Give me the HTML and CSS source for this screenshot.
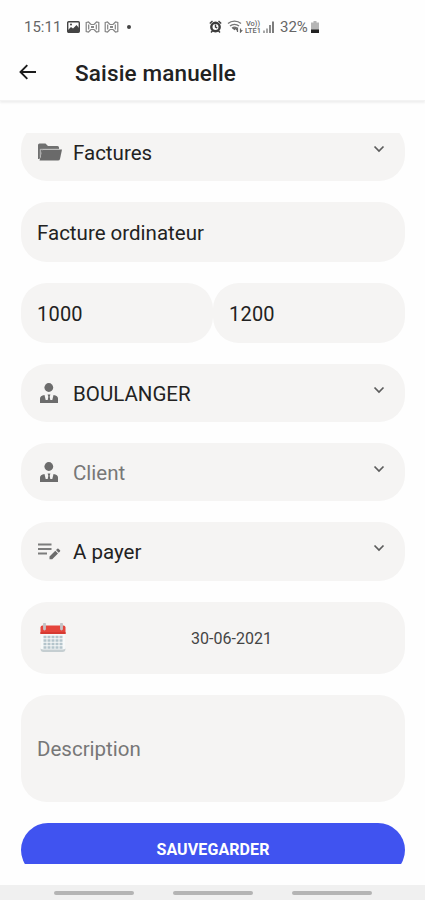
FILE: index.html
```html
<!DOCTYPE html>
<html lang="fr">
<head>
  <meta charset="UTF-8" />
  <meta name="viewport" content="width=device-width, initial-scale=1.0" />
  <title>Saisie manuelle</title>
  <link rel="stylesheet" href="styles.css">
</head>
<body>
  <!-- Icônes réutilisées -->
  <svg class="sprite" width="0" height="0">
    <symbol id="chevron" viewBox="0 0 12 8">
      <path d="M1.5 1.5 6 6l4.500-4.500" fill="none" stroke="#5c5c5c" stroke-width="1.700" />
    </symbol>
    <symbol id="person" viewBox="0 0 18 20">
      <circle cx="8.800" cy="4.500" r="4.400" fill="#6c6c6c" />
      <path d="M0 20v-4.500c0-2 1.500-3 4.500-3.500l1.200 5h2l.6-3.300-.7-2.200h2.800l-.7 2.200.6 3.300h2l1.200-5c3 .5 4.500 1.500 4.500 3.500V20z" fill="#6c6c6c" />
    </symbol>
    <symbol id="gamepad" viewBox="0 0 15 12">
      <path d="M1.200 1.500 3.500 1 6 3.500h3L11.500 1l2.300.5v9l-2.300.5L9 8.500H6L3.500 11l-2.300-.5zM3.700 3.500v5M11.300 3.500v5" fill="none" stroke="#848484" stroke-width="1.200" />
      <path d="M6 5h3v2H6z" fill="#888" />
    </symbol>
  </svg>

  <div class="status-bar">
    <span class="time">15:11</span>
    <svg class="ic-picture" viewBox="0 0 13 12">
      <rect x=".7" y=".7" width="11.600" height="10.600" rx="1" fill="none" stroke="#444" stroke-width="1.400" />
      <path d="M1 9l3-3 2 1.500L9.500 4 12 7v4H1z" fill="#444" />
      <circle cx="4" cy="3.500" r="1" fill="#444" />
    </svg>
    <svg class="ic-pad"><use href="#gamepad" /></svg>
    <svg class="ic-pad"><use href="#gamepad" /></svg>
    <span class="dot"></span>
    <div class="status-right">
      <svg class="ic-alarm" viewBox="0 0 13 13">
        <circle cx="6.500" cy="7" r="4.200" fill="none" stroke="#3c3c3c" stroke-width="2.400" />
        <path d="M.8 3.500 3.500 1M12.200 3.500 9.500 1M2 12.500l1.800-2M11 12.500l-1.800-2M6.500 4.500V7l1.700 1" fill="none" stroke="#3c3c3c" stroke-width="1.400" />
      </svg>
      <svg class="ic-wifi" viewBox="0 0 17 13">
        <path d="M1 3.500C4.500.3 10.500.3 14 3.500M3 6c2.500-2.300 6.500-2.300 9 0M5.200 8.200c1.300-1.200 3.300-1.200 4.600 0" fill="none" stroke="#777" stroke-width="1.300" />
        <path d="M7.500 9.500 6 8h3zM10.500 12V8.500L9 10M13.500 8.500V12l1.800-1.800" fill="none" stroke="#666" stroke-width="1.200" />
      </svg>
      <svg class="ic-lte" viewBox="0 0 17 13">
        <text x="1" y="6" textLength="14" lengthAdjust="spacingAndGlyphs">Vo))</text>
        <text x="0" y="12.500" textLength="16" lengthAdjust="spacingAndGlyphs">LTE1</text>
      </svg>
      <svg class="ic-signal" viewBox="0 0 11 12">
        <path d="M1 12V9.500M4 12V7.500" stroke="#999" stroke-width="1.700" />
        <path d="M7 12V4" stroke="#777" stroke-width="1.700" />
        <path d="M10 12V.5" stroke="#666" stroke-width="1.700" />
      </svg>
      <span class="percent">32%</span>
      <svg class="ic-battery" viewBox="0 0 8 12">
        <path d="M2.500 0h3v1.500H8V12H0V1.500h2.500z" fill="#b5b5b5" />
        <path d="M0 8.500h8V12H0z" fill="#222" />
      </svg>
    </div>
  </div>

  <header>
    <svg class="back" viewBox="0 0 18 16">
      <path d="M17 8H2M8.300 1.200 1.500 8l6.800 6.800" fill="none" stroke="#1c1c1c" stroke-width="1.900" />
    </svg>
    <h1>Saisie manuelle</h1>
  </header>

  <main class="form">
    <div class="field select first">
      <svg class="ic-folder" viewBox="0 0 24 18">
        <path d="M0 16V2Q0 .5 1.500.5h6L10 3h9.500q1.500 0 1.500 1.500V6H5L1.500 16z" fill="#707070" />
        <path d="M4.500 6.500H24L22 16q-.4 1.500-2 1.500H1.500z" fill="#6a6a6a" />
        <path d="M2.300 14.500V6.300H22" fill="none" stroke="#c4c4c4" stroke-width=".9" />
      </svg>
      <span class="label">Factures</span>
      <svg class="chevron"><use href="#chevron" /></svg>
    </div>

    <div class="field input">Facture ordinateur</div>

    <div class="row">
      <div class="field input">1000</div>
      <div class="field input">1200</div>
    </div>

    <div class="field select">
      <svg class="ic-person"><use href="#person" /></svg>
      <span class="label">BOULANGER</span>
      <svg class="chevron"><use href="#chevron" /></svg>
    </div>

    <div class="field select">
      <svg class="ic-person"><use href="#person" /></svg>
      <span class="label placeholder">Client</span>
      <svg class="chevron"><use href="#chevron" /></svg>
    </div>

    <div class="field select">
      <svg class="ic-note" viewBox="0 0 23 17">
        <path d="M0 1.500h13.500M0 6h13.500M0 10.500h9" stroke="#7c7c7c" stroke-width="1.900" />
        <path d="M11.500 13.500v2.700h2.700L20 10.400l-2.700-2.700zM18 7l2.700 2.700 1.300-1.300q.6-.6 0-1.200L20.500 5.700q-.6-.6-1.200 0z" fill="#6c6c6c" />
      </svg>
      <span class="label">A payer</span>
      <svg class="chevron"><use href="#chevron" /></svg>
    </div>

    <div class="field date">
      <svg class="ic-calendar" viewBox="0 0 26 30">
        <path d="M1 10h24v16q0 2.500-2.500 2.500h-19Q1 28.500 1 26z" fill="#f7f9f9" />
        <path d="M.5 25.500q0 3.500 3 3.500h19q3 0 3-3.500-1 1-3 1h-19q-2 0-3-1z" fill="#c5ced1" />
        <path d="M.5 11V4.500q0-2 2-2h21q2 0 2 2V11z" fill="#e5453c" />
        <path d="M.5 9h25v2H.5z" fill="#d63a32" />
        <path d="M4.500 1v5M21.500 1v5" stroke="#c3c3c6" stroke-width="2.800" stroke-linecap="round" />
        <path d="M3.500 14h19M3.500 17.500h19M3.500 21h19M3.500 24.500h19" stroke="#b4c4cb" stroke-width="2.300" stroke-dasharray="3 1" />
      </svg>
      <span>30-06-2021</span>
    </div>

    <div class="field textarea">Description</div>

    <button class="save">SAUVEGARDER</button>
  </main>

  <footer>
    <span></span>
    <span></span>
    <span></span>
  </footer>
</body>
</html>
```
FILE: styles.css
```css
*, *::before, *::after {
  box-sizing: border-box;
  margin: 0;
  padding: 0;
}
body {
  font-family: Roboto, sans-serif;
  background: #fefefe;
  color: #222;
  width: 425px;
  height: 900px;
  display: flex;
  flex-direction: column;
  overflow: hidden;
}
svg {
  display: block;
  flex: none;
}
.sprite {
  display: none;
}

/* Barre d'état */
.status-bar {
  height: 46px;
  flex: none;
  display: flex;
  align-items: center;
  padding: 7px 0 0 24px;
  color: #666;
  font-size: 15px;
}
.time {
  width: 43px;
}
.ic-picture {
  width: 13px;
  height: 12px;
  margin-right: 5px;
}
.ic-pad {
  width: 15px;
  height: 12px;
  margin-right: 4px;
}
.dot {
  width: 4px;
  height: 4px;
  margin-left: 4px;
  border-radius: 50%;
  background: #444;
}
.status-right {
  display: flex;
  align-items: center;
  margin-left: 78px;
}
.ic-alarm {
  width: 13px;
  height: 13px;
}
.ic-wifi {
  width: 17px;
  height: 13px;
  margin-left: 5px;
}
.ic-lte {
  width: 17px;
  height: 13px;
  margin-left: 1px;
  font-size: 7px;
  font-weight: 500;
  fill: #666;
}
.ic-signal {
  width: 11px;
  height: 12px;
  margin-left: 1px;
}
.percent {
  width: 30px;
  margin-left: 6px;
}
.ic-battery {
  width: 8px;
  height: 12px;
  margin-left: 1px;
}

/* En-tête */
header {
  height: 55px;
  flex: none;
  display: flex;
  align-items: center;
  padding: 0 20px 0 19px;
  border-bottom: 1px solid #f3f3f3;
  box-shadow: 0 2px 2px rgba(0, 0, 0, 0.06);
}
.back {
  width: 18px;
  height: 16px;
  margin: -3px 38px 0 0;
}
h1 {
  font-size: 22.500px;
  font-weight: 500;
  line-height: 30px;
  letter-spacing: 0.15px;
}

/* Formulaire */
.form {
  height: 731px;
  flex: none;
  margin: 32px 20px 0 21px;
  display: flex;
  flex-direction: column;
  gap: 21px;
  overflow: hidden;
}
.field {
  flex: none;
  display: flex;
  align-items: center;
  background: #f5f4f3;
  border-radius: 26px;
  padding: 1px 16px 0;
  font-size: 20.500px;
}
.select {
  height: 58.200px;
}
.first {
  margin-top: -10.200px;
}
.input {
  height: 60px;
}
.row {
  display: flex;
  flex: none;
}
.row .field {
  flex: 1;
  font-size: 20px;
  letter-spacing: 0.2px;
}
.label {
  flex: 1;
}
.placeholder,
.textarea {
  color: #777;
}
.ic-folder {
  width: 24px;
  height: 18px;
  margin: 0 12px 0 1px;
}
.first .label {
  margin-left: -1px;
  padding-top: 1px;
}
.ic-person {
  width: 18px;
  height: 20px;
  margin: -2px 15px 0 3px;
}
.ic-note {
  width: 23px;
  height: 17px;
  margin: 0 12px 0 1px;
}
.chevron {
  width: 12px;
  height: 8px;
  margin: -7px 4px 0 0;
}
.date {
  height: 72px;
  font-size: 16px;
  color: #444;
}
.date span {
  flex: 1;
  text-align: center;
  padding-left: 8px;
}
.ic-calendar {
  width: 26px;
  height: 30px;
  margin-left: 3px;
}
.textarea {
  height: 107px;
  padding-top: 2px;
}
.save {
  flex: none;
  height: 54px;
  border: none;
  border-radius: 27px;
  background: #4053f0;
  color: #fff;
  font-family: inherit;
  font-size: 16px;
  font-weight: 700;
  letter-spacing: 0.1px;
}

/* Barre de navigation */
footer {
  height: 15px;
  margin-top: auto;
  flex: none;
  display: flex;
  justify-content: center;
  gap: 39px;
  padding-top: 6px;
  background: #f0f0f0;
}
footer span {
  width: 80px;
  height: 4px;
  border-radius: 2px;
  background: #b4b4b4;
}
```
